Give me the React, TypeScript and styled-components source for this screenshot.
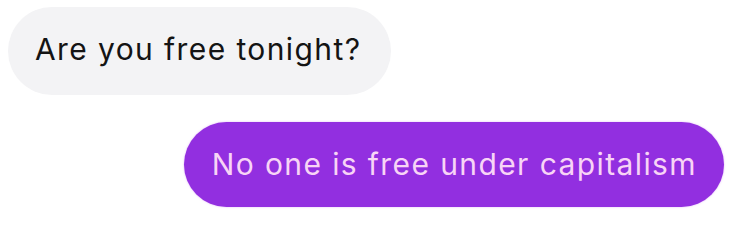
import React from "react";
import styled, { createGlobalStyle } from "styled-components";

const Global = createGlobalStyle`
  html, body { margin: 0; padding: 0; background: #ffffff; }
  body { width: 736px; height: 246px; overflow: hidden; }
`;

const Thread = styled.div`
  display: flex;
  flex-direction: column;
  width: 736px;
  height: 246px;
  box-sizing: border-box;
  padding: 7px 12px 0 8px;
  gap: 27px;
  font-family: Inter, "Liberation Sans", sans-serif;
`;

const Row = styled.div<{ $mine?: boolean }>`
  display: flex;
  justify-content: ${(p) => (p.$mine ? "flex-end" : "flex-start")};
`;

const Bubble = styled.div<{ $mine?: boolean }>`
  display: flex;
  align-items: center;
  box-sizing: border-box;
  height: ${(p) => (p.$mine ? "85px" : "88px")};
  padding: ${(p) => (p.$mine ? "0 27px 2px 28px" : "0 30px 4px 27px")};
  border-radius: 44px;
  background: ${(p) => (p.$mine ? "#922fe0" : "#f3f3f5")};
  color: ${(p) => (p.$mine ? "#f8d4f6" : "#141414")};
  font-size: 30px;
  letter-spacing: 1.4px;
  white-space: nowrap;
  box-shadow: ${(p) => (p.$mine ? "0 0 2px rgba(200,120,240,0.6)" : "none")};
`;

export default function App() {
  return (
    <>
      <Global />
      <Thread>
        <Row>
          <Bubble>Are you free tonight?</Bubble>
        </Row>
        <Row $mine>
          <Bubble $mine>No one is free under capitalism</Bubble>
        </Row>
      </Thread>
    </>
  );
}
